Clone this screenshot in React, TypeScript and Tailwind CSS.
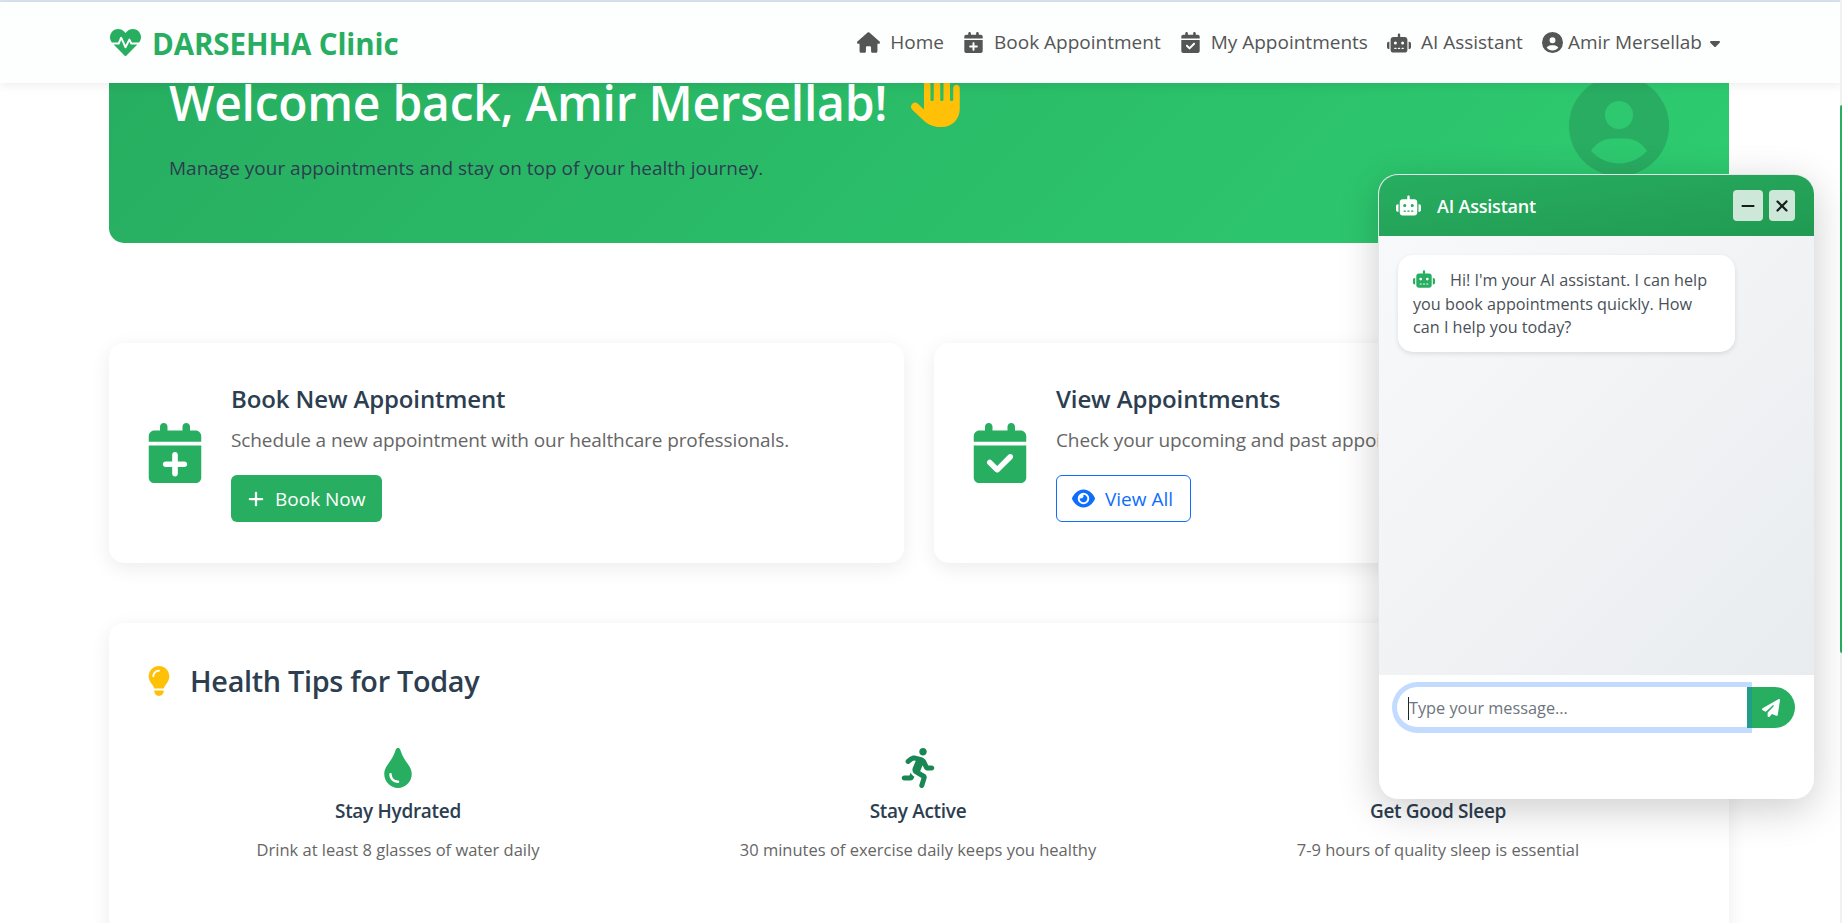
import {
  FaCalendarCheck,
  FaCalendarPlus,
  FaCaretDown,
  FaCircleUser,
  FaEye,
  FaHand,
  FaHouse,
  FaLightbulb,
  FaMinus,
  FaMoon,
  FaPaperPlane,
  FaPlus,
  FaRobot,
  FaXmark,
} from "react-icons/fa6";
import { FaHeartbeat, FaRunning, FaTint } from "react-icons/fa";
import type { ReactNode } from "react";

function NavItem({ icon, label }: { icon: ReactNode; label: string }) {
  return (
    <a className="flex items-center gap-[10px] text-[19px] text-[#555]">
      {icon}
      {label}
    </a>
  );
}

function Tip({
  icon,
  title,
  text,
}: {
  icon: ReactNode;
  title: string;
  text: string;
}) {
  return (
    <div className="flex flex-col items-center text-center">
      <div className="h-[40px] text-[40px] leading-none">{icon}</div>
      <h4 className="mt-[9px] text-[19px] font-semibold tracking-[-0.3px] text-[#2c3e50]">{title}</h4>
      <p className="mt-[12px] text-[16.5px] text-[#666]">{text}</p>
    </div>
  );
}

export default function App() {
  return (
    <div className="relative h-[923px] overflow-hidden bg-white font-['Open_Sans',sans-serif]">
      <div className="h-[2px] bg-[#d8e4ee]" />
      <nav className="relative z-10 flex h-[81px] items-center justify-between bg-[#fdfefe] pl-[110px] pr-[119px] shadow-[0_2px_10px_rgba(0,0,0,0.08)]">
        <a className="flex items-center gap-[11px] text-[29.5px] font-bold tracking-[-0.1px] text-[#27ae60]">
          <FaHeartbeat className="text-[31px]" />
          <span className="pt-[3px]">DARSEHHA Clinic</span>
        </a>
        <div className="flex items-center gap-[19px]">
          <NavItem icon={<FaHouse className="text-[23px]" />} label="Home" />
          <NavItem icon={<FaCalendarPlus className="text-[21px]" />} label="Book Appointment" />
          <NavItem icon={<FaCalendarCheck className="text-[21px]" />} label="My Appointments" />
          <NavItem icon={<FaRobot className="text-[24px]" />} label="AI Assistant" />
          <a className="flex items-center gap-[5px] text-[19px] text-[#555]">
            <FaCircleUser className="text-[21px]" />
            Amir Mersellab
            <FaCaretDown className="text-[16px]" />
          </a>
        </div>
      </nav>

      <main className="pl-[109px] pr-[113px]">
        <section className="flex h-[160px] justify-between rounded-b-[15px] bg-[linear-gradient(135deg,#27ae60,#2ecc71)] px-[60px]">
          <div>
            <h1 className="flex items-center gap-[24px] text-[48px] font-semibold leading-[40px] tracking-[-0.25px] text-white">
              Welcome back, Amir Mersellab!
              <FaHand className="-mb-[10px] -mt-[14px] text-[52px] text-[#ffc107]" />
            </h1>
            <p className="mt-[31px] text-[19px] text-[#2c3e50]">
              Manage your appointments and stay on top of your health journey.
            </p>
          </div>
          <FaCircleUser className="-mt-[7px] text-[100px] text-[#29ad62]" />
        </section>

        <section className="mt-[100px] grid grid-cols-2 gap-[30px]">
          <div className="flex h-[220px] items-center gap-[26px] rounded-[15px] bg-white pl-[36px] shadow-[0_5px_20px_rgba(0,0,0,0.08)]">
            <FaCalendarPlus className="text-[60px] text-[#27ae60]" />
            <div className="mb-[3px]">
              <h3 className="text-[24px] font-semibold tracking-[-0.12px] text-[#2c3e50]">Book New Appointment</h3>
              <p className="mt-[9px] text-[19px] tracking-[-0.1px] text-[#666]">
                Schedule a new appointment with our healthcare professionals.
              </p>
              <button className="mt-[21px] flex h-[47px] items-center gap-[10px] rounded-[6px] bg-[#27ae60] px-[16px] text-[19px] text-white">
                <FaPlus className="text-[18px]" />
                Book Now
              </button>
            </div>
          </div>
          <div className="flex h-[220px] items-center gap-[26px] rounded-[15px] bg-white pl-[36px] shadow-[0_5px_20px_rgba(0,0,0,0.08)]">
            <FaCalendarCheck className="text-[60px] text-[#27ae60]" />
            <div className="mb-[3px]">
              <h3 className="text-[24px] font-semibold tracking-[-0.12px] text-[#2c3e50]">View Appointments</h3>
              <p className="mt-[9px] text-[19px] tracking-[-0.1px] text-[#666]">
                Check your upcoming and past appointments.
              </p>
              <button className="mt-[21px] flex h-[47px] items-center gap-[10px] rounded-[6px] border border-[#0d6efd] pl-[15px] pr-[17px] text-[19px] text-[#0d6efd]">
                <FaEye className="text-[23px]" />
                View All
              </button>
            </div>
          </div>
        </section>

        <section className="mt-[60px] h-[400px] rounded-[15px] bg-white pt-[36px] shadow-[0_5px_20px_rgba(0,0,0,0.08)]">
          <h2 className="ml-[35px] flex items-center gap-[16px] text-[28.8px] font-semibold tracking-[-0.3px] text-[#2c3e50]">
            <FaLightbulb className="text-[30px] text-[#ffc107]" />
            Health Tips for Today
          </h2>
          <div className="ml-[29px] mr-[31px] mt-[46px] grid grid-cols-3">
            <Tip
              icon={<FaTint className="text-[#27ae60]" />}
              title="Stay Hydrated"
              text="Drink at least 8 glasses of water daily"
            />
            <Tip
              icon={<FaRunning className="text-[#198754]" />}
              title="Stay Active"
              text="30 minutes of exercise daily keeps you healthy"
            />
            <Tip
              icon={<FaMoon className="text-[#0dcaf0]" />}
              title="Get Good Sleep"
              text="7-9 hours of quality sleep is essential"
            />
          </div>
        </section>
      </main>

      {/* page scrollbar peeking out at the right edge */}
      <div className="absolute right-0 top-0 z-10 h-full w-[2px] bg-[#f1f1f1]">
        <div className="mt-[105px] h-[548px] rounded-l bg-[#27ae60]" />
      </div>

      {/* floating chat */}
      <aside className="absolute left-[1378px] top-[174px] z-20 flex h-[625px] w-[436px] flex-col overflow-hidden rounded-[20px] border-l border-t border-[#e4e7ea] bg-white shadow-[0_10px_40px_rgba(0,0,0,0.2)]">
        <header className="flex h-[61px] shrink-0 items-center bg-gradient-to-br from-[#27ae60] to-[#219a52] pl-[17px] pr-[19px] text-white">
          <FaRobot className="text-[25px]" />
          <span className="ml-[16px] pt-[2px] text-[18px] font-semibold tracking-[-0.2px]">AI Assistant</span>
          <button className="ml-auto flex h-[31px] w-[30px] items-center justify-center rounded-[4px] bg-[#cde7d9] text-[#16201a]">
            <FaMinus className="text-[16px]" />
          </button>
          <button className="ml-[6px] flex h-[31px] w-[26px] items-center justify-center rounded-[4px] bg-[#cde7d9] text-[#16201a]">
            <FaXmark className="text-[18px]" />
          </button>
        </header>
        <div className="h-[439px] shrink-0 bg-gradient-to-br from-[#f8f9fa] to-[#e9ecef] pl-[19px] pt-[19px]">
          <div className="w-[337px] rounded-[15px] bg-white px-[15px] pb-[12px] pt-[14px] text-[16.2px] leading-[23.5px] text-[#495057] shadow-[0_2px_5px_rgba(0,0,0,0.1)]">
            <FaRobot className="-my-[2px] mr-[15px] inline-block align-[-2px] text-[22px] text-[#27ae60]" />
            Hi! I'm your AI assistant. I can help you book appointments quickly. How can I help you today?
          </div>
        </div>
        <div className="flex items-start pl-[13px] pt-[7px]">
          <div className="relative z-10 flex h-[51px] w-[360px] items-center rounded-l-full border-[5px] border-b-[6px] border-[rgba(13,110,253,0.25)] bg-white bg-clip-padding pl-[11px] pt-[3px] text-[16.3px] text-[#6c757d]">
            <span className="h-[23px] w-px bg-[#212529]" />
            Type your message...
          </div>
          <button className="-ml-[5px] mt-[5px] flex h-[41px] w-[48px] items-center justify-center rounded-r-full bg-[#27ae60] text-white">
            <FaPaperPlane className="text-[18px]" />
          </button>
        </div>
      </aside>
    </div>
  );
}
